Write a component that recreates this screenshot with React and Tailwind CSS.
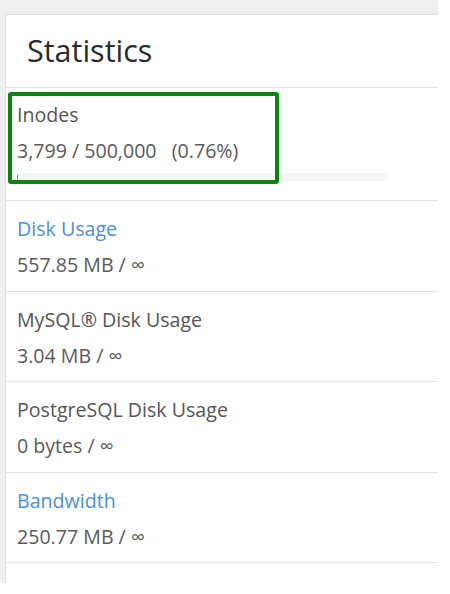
import React from 'react';

const rows = [
    { label: 'Disk Usage', value: '557.85 MB / ∞', link: true },
    { label: 'MySQL® Disk Usage', value: '3.04 MB / ∞' },
    { label: 'PostgreSQL Disk Usage', value: '0 bytes / ∞' },
    { label: 'Bandwidth', value: '250.77 MB / ∞', link: true },
    { label: 'Addon Domains', value: '0 / ∞', link: true },
];

function StatRow({ label, value, link }) {
    return (
        <div className="border-b border-[#e4e4e4] pl-[11px] pt-[15px] pb-[12.5px]">
            <div className={`text-[19.6px] leading-[26px] ${link ? 'text-[#4a90d9]' : 'text-[#555]'}`}>{label}</div>
            <div className="mt-[10px] text-[19.6px] leading-[26px] text-[#5a5a5a]">{value}</div>
        </div>
    );
}

export default function App() {
    return (
        <div className="w-[450px] h-[594px] bg-white overflow-hidden" style={{ fontFamily: '"Open Sans", "Noto Sans", sans-serif' }}>
            <div className="w-[438px] h-[583px] bg-[#efefef] pt-[14px] pl-[5px] overflow-hidden">
                <div className="bg-white border-l border-t border-[#dcdcdc] rounded-tl-[4px] h-full">
                    {/* 제목 */}
                    <div className="h-[73px] border-b border-[#e4e4e4] pl-[21px] flex items-center">
                        <h1 className="text-[30.5px] leading-none text-[#2a2a2a] pb-[2px]">Statistics</h1>
                    </div>

                    {/* Inodes */}
                    <div className="relative border-b border-[#e4e4e4] pl-[11px] pt-[14px] pb-[19px]">
                        <div className="text-[19.6px] leading-[26px] text-[#555]">Inodes</div>
                        <div className="mt-[10px] text-[19.6px] leading-[26px] text-[#5a5a5a] whitespace-pre">3,799 / 500,000   (0.76%)</div>
                        <div className="mt-[9px] w-[371px] h-[8px] rounded-full bg-[#f4f5f6] overflow-hidden">
                            <div className="h-full bg-[#2e9a3a]" style={{ width: '0.4%' }} />
                        </div>
                        <div className="absolute left-[2px] top-[4px] w-[271px] h-[92px] border-[4px] border-[#0a870a] rounded-[3px]" />
                    </div>

                    {rows.map((r) => (
                        <StatRow key={r.label} {...r} />
                    ))}
                </div>
            </div>
        </div>
    );
}
